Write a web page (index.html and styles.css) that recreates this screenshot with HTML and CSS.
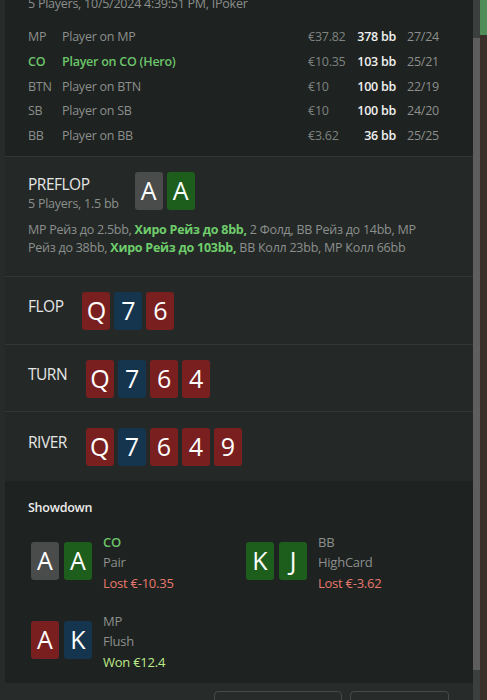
FILE: index.html
```html
<!DOCTYPE html>
<html lang="ru">
<head>
<meta charset="utf-8">
<title>Hand history</title>
<link rel="stylesheet" href="styles.css">
</head>
<body>
<div class="panel">
  <div class="scroll">
    <section class="players">
      <div class="hand-info">5 Players, 10/5/2024 4:39:51 PM, IPoker</div>
      <div class="player-table">
        <div class="row"><span class="pos">MP</span><span class="name">Player on MP</span><span class="money">€37.82</span><span class="bb">378 bb</span><span class="stats">27/24</span></div>
        <div class="row hero"><span class="pos">CO</span><span class="name">Player on CO (Hero)</span><span class="money">€10.35</span><span class="bb">103 bb</span><span class="stats">25/21</span></div>
        <div class="row"><span class="pos">BTN</span><span class="name">Player on BTN</span><span class="money">€10</span><span class="bb">100 bb</span><span class="stats">22/19</span></div>
        <div class="row"><span class="pos">SB</span><span class="name">Player on SB</span><span class="money">€10</span><span class="bb">100 bb</span><span class="stats">24/20</span></div>
        <div class="row"><span class="pos">BB</span><span class="name">Player on BB</span><span class="money">€3.62</span><span class="bb">36 bb</span><span class="stats">25/25</span></div>
      </div>
    </section>

    <section class="street preflop">
      <div class="street-head">
        <div class="street-title">
          <div class="street-name">PREFLOP</div>
          <div class="street-sub">5 Players, 1.5 bb</div>
        </div>
        <div class="cards">
          <span class="card spade">A</span><span class="card club">A</span>
        </div>
      </div>
      <p class="actions">MP Рейз до 2.5bb, <b class="hero-act">Хиро Рейз до 8bb,</b> 2 Фолд, BB Рейз до 14bb, MP Рейз до 38bb, <b class="hero-act">Хиро Рейз до 103bb,</b> BB Колл 23bb, MP Колл 66bb</p>
    </section>

    <section class="street flop">
      <div class="street-head">
        <div class="street-name">FLOP</div>
        <div class="cards">
          <span class="card heart">Q</span><span class="card diamond">7</span><span class="card heart">6</span>
        </div>
      </div>
    </section>

    <section class="street turn">
      <div class="street-head">
        <div class="street-name">TURN</div>
        <div class="cards">
          <span class="card heart">Q</span><span class="card diamond">7</span><span class="card heart">6</span><span class="card heart">4</span>
        </div>
      </div>
    </section>

    <section class="street river">
      <div class="street-head">
        <div class="street-name">RIVER</div>
        <div class="cards">
          <span class="card heart">Q</span><span class="card diamond">7</span><span class="card heart">6</span><span class="card heart">4</span><span class="card heart">9</span>
        </div>
      </div>
    </section>

    <section class="showdown">
      <div class="showdown-title">Showdown</div>
      <div class="hands">
        <div class="hand">
          <div class="cards"><span class="card spade">A</span><span class="card club">A</span></div>
          <div class="hand-info-col">
            <div class="hand-pos hero-pos">CO</div>
            <div class="hand-rank">Pair</div>
            <div class="lost">Lost €-10.35</div>
          </div>
        </div>
        <div class="hand">
          <div class="cards"><span class="card club">K</span><span class="card club">J</span></div>
          <div class="hand-info-col">
            <div class="hand-pos">BB</div>
            <div class="hand-rank">HighCard</div>
            <div class="lost">Lost €-3.62</div>
          </div>
        </div>
        <div class="hand">
          <div class="cards"><span class="card heart">A</span><span class="card diamond">K</span></div>
          <div class="hand-info-col">
            <div class="hand-pos">MP</div>
            <div class="hand-rank">Flush</div>
            <div class="won">Won €12.4</div>
          </div>
        </div>
      </div>
    </section>

    <div class="footer">
      <span class="btn btn-wide"></span>
      <span class="btn btn-narrow"></span>
    </div>
  </div>
</div>
<div class="scrollbar"><div class="thumb"></div></div>
<div class="edge"><div class="edge-top"></div></div>
</body>
</html>
```

FILE: styles.css
```css
html, body {
  margin: 0;
  padding: 0;
}

body {
  width: 487px;
  height: 700px;
  overflow: hidden;
  display: flex;
  background: #272c2b;
  font-family: "Open Sans", "Noto Sans", sans-serif;
  font-size: 12.5px;
  letter-spacing: -0.25px;
  color: #8c8f8d;
}

.panel {
  width: 473px;
  height: 700px;
  padding-left: 5px;
  box-sizing: border-box;
  overflow: hidden;
}

.scroll {
  margin-top: -6px;
}

.players {
  background: #1e2220;
  padding: 0 0 7px 23px;
  border-bottom: 1px solid #313634;
}

.hand-info {
  line-height: 20px;
  color: #8c8f8d;
  margin-bottom: 11px;
  white-space: nowrap;
}

.player-table .row {
  display: grid;
  grid-template-columns: 34px 246px 41px 47px auto;
  height: 24.75px;
  line-height: 24.75px;
  align-items: center;
  white-space: nowrap;
}

.bb {
  text-align: right;
  color: #f0f0f0;
  font-weight: 600;
}

.stats {
  padding-left: 11px;
}

.money {
  color: #7e8280;
}

.row.hero .pos,
.row.hero .name {
  color: #6cc46b;
  font-weight: 600;
}

.street {
  background: #242927;
  padding: 15px 23px 14px 23px;
  border-bottom: 1px solid #313634;
}

.street.turn {
  padding-bottom: 13px;
}

.street.river {
  border-bottom: none;
  padding-top: 16px;
  padding-bottom: 15px;
}

.street.preflop {
  padding-bottom: 19px;
}

.street-head {
  display: flex;
  align-items: flex-start;
  gap: 19px;
}

.preflop .street-head {
  gap: 16px;
}

.street-name {
  font-size: 15.5px;
  letter-spacing: -0.5px;
  line-height: 20px;
  color: #e6e6e6;
  padding-top: 4px;
}

.preflop .street-name {
  padding-top: 2px;
}

.street-sub {
  font-size: 12.5px;
  line-height: 20px;
  color: #8c8f8d;
  white-space: nowrap;
}

.cards {
  display: flex;
  gap: 4px;
}

.card {
  width: 28px;
  height: 38px;
  border-radius: 3px;
  display: flex;
  align-items: center;
  justify-content: center;
  color: #ffffff;
  font-size: 25px;
  letter-spacing: 0;
  line-height: 1;
}

.card.spade { background: #4a4b4b; }
.card.club { background: #1d5e1c; }
.card.heart { background: #7a1f20; }
.card.diamond { background: #15354f; }

.actions {
  margin: 7px 0 0 0;
  line-height: 18px;
  width: 405px;
  color: #8c8f8d;
}

.hero-act {
  color: #6fcd6c;
  font-weight: 700;
}

.showdown {
  background: #1e2220;
  padding: 17px 23px 11px 23px;
}

.showdown-title {
  color: #ececec;
  font-weight: 600;
  font-size: 12.5px;
  line-height: 20px;
}

.hands {
  display: grid;
  grid-template-columns: 215px 215px;
  row-gap: 13.5px;
  margin-top: 10px;
  padding-left: 3px;
}

.hand {
  display: flex;
  align-items: center;
  gap: 11px;
}

.hand .cards {
  gap: 5px;
}

.hand-info-col {
  line-height: 20.5px;
  font-size: 13px;
  white-space: nowrap;
  margin-top: 4px;
}

.hero-pos {
  color: #6cc46b;
  font-weight: 600;
}

.lost {
  color: #e8786d;
}

.won {
  color: #bde98a;
}

.footer {
  background: #272c2b;
  height: 20px;
  display: flex;
  gap: 8px;
  padding-left: 209px;
  padding-top: 8px;
  box-sizing: border-box;
}

.btn {
  display: block;
  height: 20px;
  border: 1px solid #454b4a;
  border-radius: 4px;
  box-sizing: border-box;
}

.btn-wide { width: 128px; }
.btn-narrow { width: 99px; }

.scrollbar {
  width: 7px;
  height: 700px;
  background: #3b403f;
  padding-top: 38px;
  box-sizing: border-box;
}

.thumb {
  height: 632px;
  background: #5e5e5e;
}

.edge {
  width: 7px;
  height: 700px;
  background: #3c2e29;
}

.edge-top {
  height: 35px;
  background: #4f8c58;
}
```
